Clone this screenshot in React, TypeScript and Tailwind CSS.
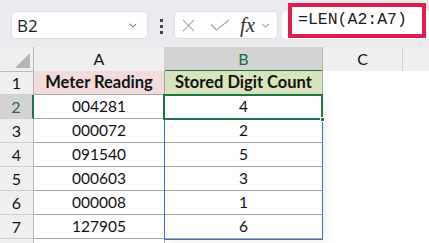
import React from 'react';

const rows = [
  { n: 1, a: 'Meter Reading', b: 'Stored Digit Count' },
  { n: 2, a: '004281', b: '4' },
  { n: 3, a: '000072', b: '2' },
  { n: 4, a: '091540', b: '5' },
  { n: 5, a: '000603', b: '3' },
  { n: 6, a: '000008', b: '1' },
  { n: 7, a: '127905', b: '6' },
];

const Chevron = ({ className }: { className: string }) => (
  <svg viewBox="0 0 12 7" className={className} fill="none" stroke="currentColor" strokeWidth="1.3">
    <path d="M1 1l5 5 5-5" />
  </svg>
);

const App: React.FC = () => {
  return (
    <div className="w-[429px] h-[243px] overflow-hidden bg-white font-['Lato',sans-serif] text-[#111]">
      {/* Formula bar */}
      <div className="h-[47px] bg-[#ebebef] flex items-start">
        <div className="mt-[11px] ml-[11px] w-[137px] h-[28px] bg-white rounded-[5px] border border-[#dedede] flex items-center justify-between pl-[5px] pr-[10px]">
          <span className="font-['Open_Sans',sans-serif] text-[17px] text-[#1b1b1b] leading-none">B2</span>
          <Chevron className="w-[8px] h-[5px] text-[#333]" />
        </div>
        <div className="mt-[19px] ml-[12px] flex flex-col gap-[3px]">
          <span className="w-[3px] h-[3px] bg-[#444]" />
          <span className="w-[3px] h-[3px] bg-[#444]" />
          <span className="w-[3px] h-[3px] bg-[#444]" />
        </div>
        <div className="mt-[11px] ml-[11px] w-[104px] h-[28px] bg-white rounded-[5px] border border-[#dedede] flex items-center pl-[7px]">
          <svg viewBox="0 0 14 14" className="w-[13px] h-[13px] text-[#a8a8a8]" fill="none" stroke="currentColor" strokeWidth="1.2">
            <path d="M1 1l12 12M13 1L1 13" />
          </svg>
          <svg viewBox="0 0 20 12" className="ml-[15px] w-[20px] h-[12px] text-[#a8a8a8]" fill="none" stroke="currentColor" strokeWidth="1.2">
            <path d="M1 5.5l5.5 5.5L19 1" />
          </svg>
          <span className="ml-[10px] font-['Liberation_Serif',serif] italic text-[21px] text-[#333] leading-none">fx</span>
          <Chevron className="ml-[6px] w-[9px] h-[5px] text-[#777]" />
        </div>
        <div className="mt-[11px] ml-[4px] flex-1 h-[28px] bg-white rounded-l-[5px] relative">
          <div className="absolute left-[6px] top-[-8px] w-[138px] h-[35px] border-[4px] border-[#e01e4c] bg-white flex items-center pl-[6px]">
            <span className="font-['Liberation_Mono',monospace] text-[16.5px] text-[#1b1b1b] leading-none">=LEN(A2:A7)</span>
          </div>
        </div>
      </div>

      {/* Sheet */}
      <div className="relative">
        <div className="grid grid-cols-[34px_131px_158px_80px_26px] auto-rows-[24px] text-[16px]">
          {/* column headers */}
          <div className="h-[25px] bg-[#efefef] border-r border-b border-[#b8b8b8] relative">
            <div className="absolute right-[3px] bottom-[3px] w-0 h-0 border-l-[15px] border-l-transparent border-b-[15px] border-b-[#b5b5b5]" />
          </div>
          <div className="h-[25px] bg-[#efefef] border-r border-r-[#cfcfcf] border-b border-b-[#a8a8a8] flex items-center justify-center">A</div>
          <div className="h-[25px] bg-[#d3d3d3] border-r border-r-[#b8b8b8] border-b-2 border-b-[#217346] flex items-center justify-center text-[#1c6a3f]">B</div>
          <div className="h-[25px] bg-[#efefef] border-r border-r-[#cfcfcf] border-b border-b-[#a8a8a8] flex items-center justify-center">C</div>
          <div className="h-[25px] bg-[#efefef] border-b border-b-[#a8a8a8]" />

          {rows.map((r) => (
            <React.Fragment key={r.n}>
              <div
                className={
                  r.n === 2
                    ? 'bg-[#d3d3d3] border-r-2 border-r-[#217346] border-b border-b-[#cfcfcf] flex items-center justify-center text-[#1c6a3f]'
                    : 'bg-[#efefef] border-r border-r-[#b8b8b8] border-b border-b-[#cfcfcf] flex items-center justify-center'
                }
              >
                {r.n}
              </div>
              <div
                className={
                  r.n === 1
                    ? 'bg-[#f2dcdb] border-r border-b border-[#a6a6a6] flex items-center justify-center font-bold text-[16.5px]'
                    : 'bg-white border-r border-b border-[#a6a6a6] flex items-center justify-center text-[15.5px]'
                }
              >
                {r.a}
              </div>
              <div
                className={
                  r.n === 1
                    ? 'bg-[#d8e4bc] border-r border-b border-[#a6a6a6] flex items-center justify-center font-bold text-[16.5px]'
                    : 'bg-white border-r border-b border-[#a6a6a6] flex items-center justify-center text-[15.5px]'
                }
              >
                {r.b}
              </div>
              <div className="bg-white" />
              <div className="bg-white" />
            </React.Fragment>
          ))}
          <div className="bg-[#efefef] border-r border-r-[#b8b8b8]" />
          <div className="bg-white border-r border-[#a6a6a6]" />
        </div>

        {/* range reference outline B2:B7 */}
        <div className="absolute left-[164px] top-[48px] w-[159px] h-[145px] border border-[#3f6fc6] shadow-[4px_2px_6px_rgba(0,0,0,0.06)]" />
        {/* active cell B2 */}
        <div className="absolute left-[163px] top-[47px] w-[160px] h-[26px] border-2 border-[#217346]" />
        <div className="absolute left-[320px] top-[70px] w-[5px] h-[5px] bg-[#217346] border border-white" />
      </div>
    </div>
  );
};

export default App;
